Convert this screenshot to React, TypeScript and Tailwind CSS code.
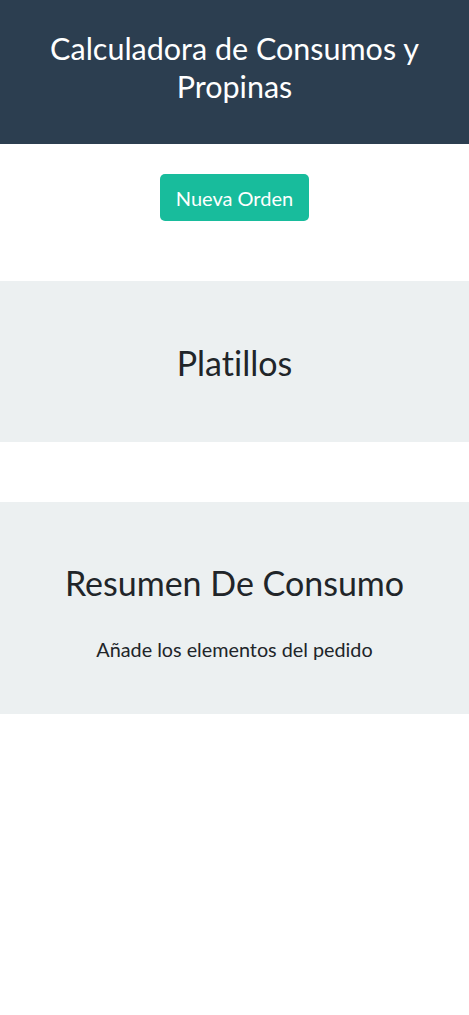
export default function App() {
  return (
    <div className="min-h-screen bg-white font-['Lato','Noto_Sans',sans-serif] text-[#212529] [font-variant-ligatures:none]">
      {/* Header */}
      <header className="bg-[#2c3e50] px-6 pt-[29px] pb-[39px]">
        <h1 className="text-center text-[30.5px] leading-[38px] font-normal text-white">
          Calculadora de Consumos y Propinas
        </h1>
      </header>

      {/* Nueva orden */}
      <div className="flex justify-center pt-[30px] pb-[60px]">
        <button
          type="button"
          className="h-[47px] w-[149px] rounded-[5px] bg-[#18bc9c] text-[20px] text-white"
        >
          Nueva Orden
        </button>
      </div>

      {/* Platillos */}
      <section className="bg-[#ecf0f1] pt-[61px] pb-[58px]">
        <h2 className="text-center text-[34px] leading-[42px] font-normal">Platillos</h2>
      </section>

      {/* Resumen */}
      <section className="mt-[60px] bg-[#ecf0f1] pt-[60px] pb-[51px]">
        <h2 className="text-center text-[34px] leading-[42px] font-normal">
          Resumen De Consumo
        </h2>
        <p className="mt-[32px] text-center text-[19.8px] leading-[27px]">
          Añade los elementos del pedido
        </p>
      </section>
    </div>
  );
}
